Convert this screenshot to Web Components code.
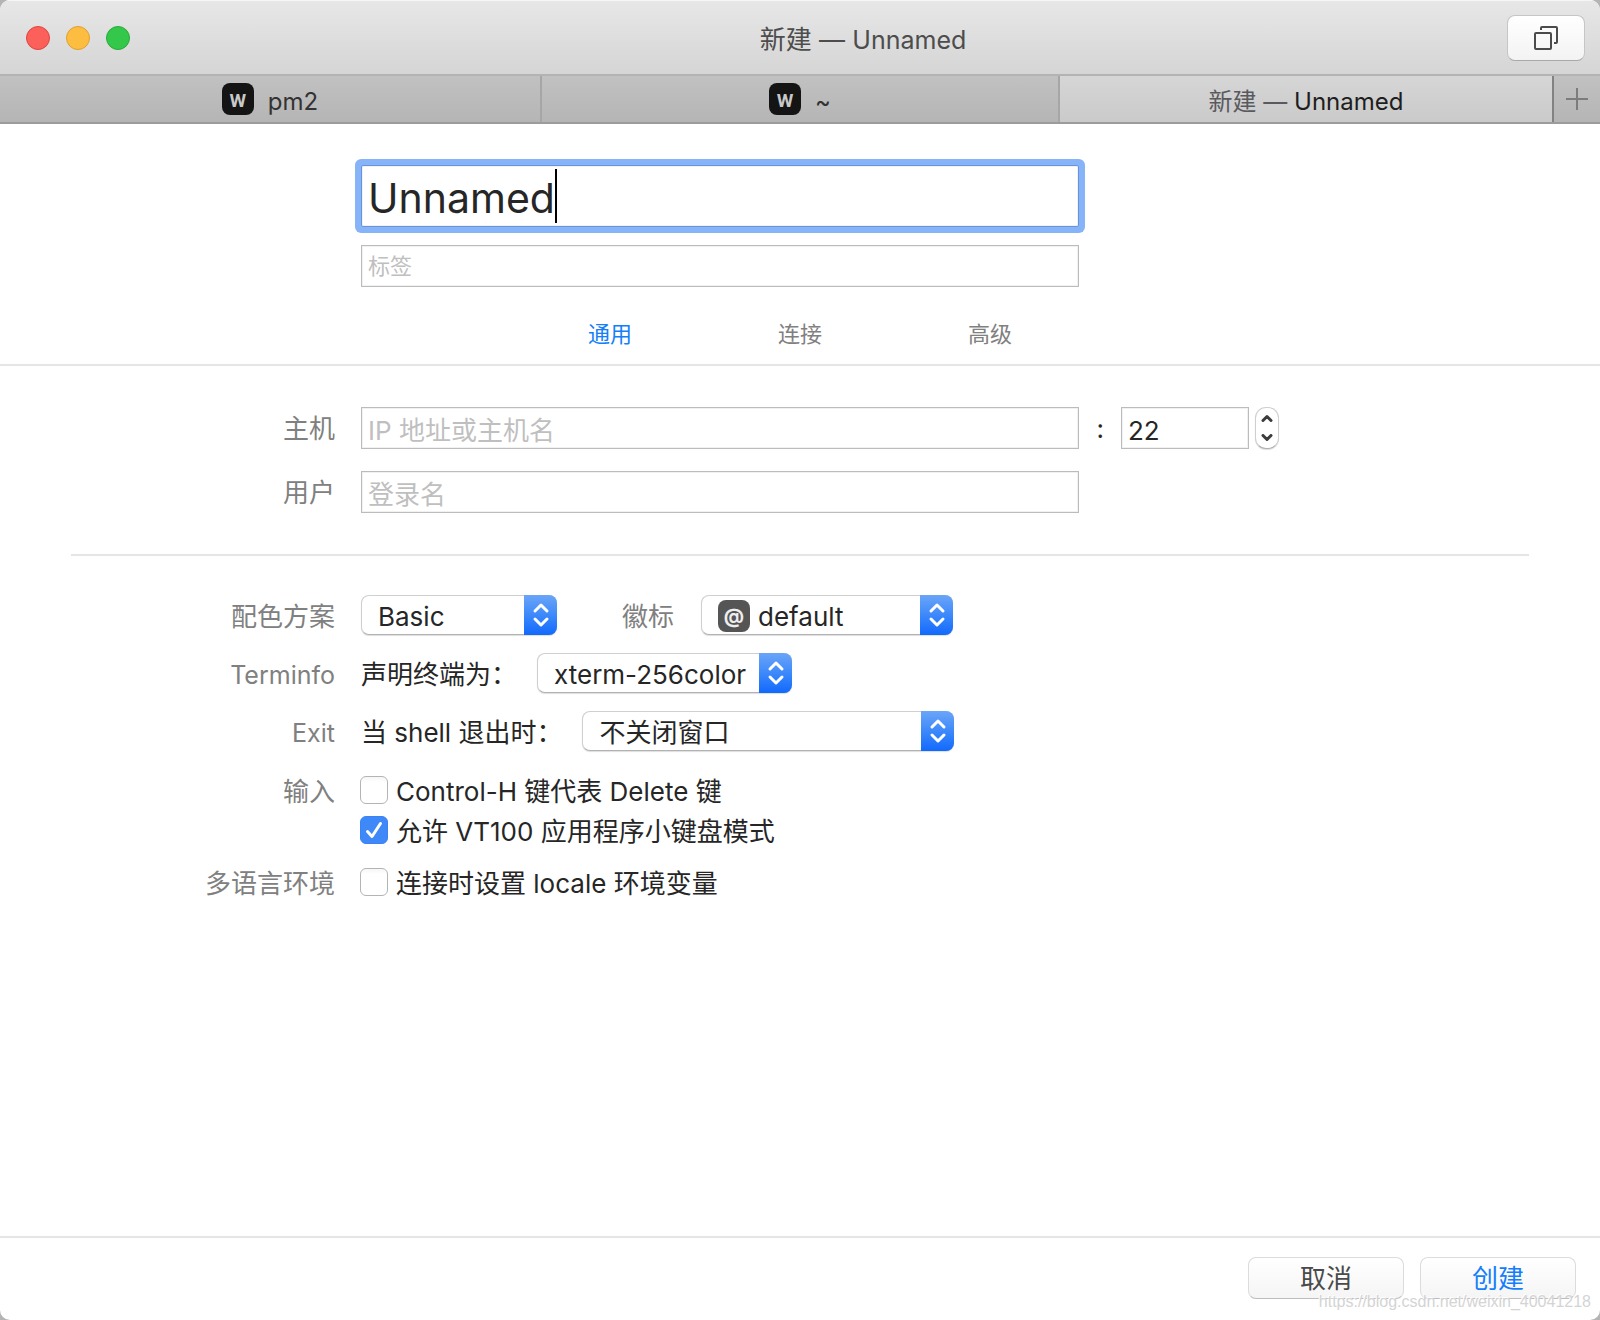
<!DOCTYPE html>
<html lang="zh-CN">
<head>
<meta charset="utf-8">
<title>新建 — Unnamed</title>
<style>
  :root {
    --ink: #262626;
    --muted: #808080;
    --accent: #147efb;
    --line: #e5e5e5;
    --latin: 25px;
  }
  * { box-sizing: border-box; }
  body {
    margin: 0;
    background: #b4b4b4;
    color: var(--ink);
    font: 26px/36px Inter, "Noto Sans CJK SC", sans-serif;
  }
  input::placeholder { color: #bfbfbf; opacity: 1; }
  input[type=number] { appearance: textfield; -moz-appearance: textfield; }
  input[type=number]::-webkit-inner-spin-button { appearance: none; margin: 0; }
  .en { font-size: var(--latin); }
</style>
</head>
<body>
<app-window>
  <title-bar slot="chrome">新建 — <span class="en">Unnamed</span></title-bar>
  <tab-strip slot="chrome">
    <window-tab><tab-badge slot="icon">W</tab-badge>pm2</window-tab>
    <window-tab><tab-badge slot="icon">W</tab-badge>~</window-tab>
    <window-tab active><span style="color:#5a5a5e">新建 —</span> Unnamed</window-tab>
  </tab-strip>

  <form-section>
    <form-row>
      <text-field size="large" focused><input id="name" aria-label="名称" value="Unnamed"></text-field>
    </form-row>
    <form-row>
      <text-field size="small"><input id="tags" aria-label="标签" placeholder="标签"></text-field>
    </form-row>
    <section-nav slot="nav">
      <a href="#general" aria-current="page">通用</a>
      <a href="#connection">连接</a>
      <a href="#advanced">高级</a>
    </section-nav>
  </form-section>

  <form-section kind="account">
    <form-row>
      <label slot="label" for="host">主机</label>
      <text-field><input id="host" placeholder="IP 地址或主机名"></text-field>
      <port-group slot="aside">
        <label slot="label" for="port">:</label>
        <text-field><input id="port" type="number" value="22"></text-field>
      </port-group>
    </form-row>
    <form-row>
      <label slot="label" for="user">用户</label>
      <text-field><input id="user" placeholder="登录名"></text-field>
    </form-row>
  </form-section>

  <form-section kind="options">
    <form-row wide>
      <label slot="label" for="scheme">配色方案</label>
      <popup-select style="--width:196px"><select id="scheme"><option>Basic</option></select></popup-select>
      <inline-label><label for="badge">徽标</label></inline-label>
      <popup-select badge style="--width:252px"><select id="badge"><option>default</option></select></popup-select>
    </form-row>
    <form-row wide>
      <span slot="label" class="en">Terminfo</span>
      <label for="term">声明终端为：</label>
      <popup-select style="--width:255px"><select id="term"><option>xterm-256color</option></select></popup-select>
    </form-row>
    <form-row wide>
      <span slot="label" class="en">Exit</span>
      <label for="exit">当 shell 退出时：</label>
      <popup-select style="--width:372px"><select id="exit"><option>不关闭窗口</option></select></popup-select>
    </form-row>
    <form-row wide checks="first">
      <span slot="label">输入</span>
      <check-box><input type="checkbox" id="ctrlh"><label for="ctrlh">Control-H 键代表 Delete 键</label></check-box>
    </form-row>
    <form-row wide checks="next">
      <check-box><input type="checkbox" id="vt100" checked><label for="vt100">允许 VT100 应用程序小键盘模式</label></check-box>
    </form-row>
    <form-row wide checks="last">
      <span slot="label">多语言环境</span>
      <check-box><input type="checkbox" id="locale"><label for="locale">连接时设置 locale 环境变量</label></check-box>
    </form-row>
  </form-section>

  <action-bar slot="footer">
    <push-button>取消</push-button>
    <push-button primary>创建</push-button>
  </action-bar>
  <page-mark slot="mark">https://blog.csdn.net/weixin_40041218</page-mark>
</app-window>

<script>
const define = (name, html, setup) => {
  const template = document.createElement('template');
  template.innerHTML = '<style>*{box-sizing:border-box}:host{box-sizing:border-box}</style>' + html;
  customElements.define(name, class extends HTMLElement {
    constructor() {
      super();
      this.attachShadow({ mode: 'open' }).append(template.content.cloneNode(true));
    }
    connectedCallback() { if (setup) setup(this, this.shadowRoot); }
  });
};

define('app-window', `
  <style>
    :host { display: flex; flex-direction: column; min-height: 100vh; position: relative;
      background: #fff; border-radius: 10px; overflow: hidden; }
    main { flex: 1; }
  </style>
  <slot name="chrome"></slot>
  <main><slot></slot></main>
  <slot name="footer"></slot>
  <slot name="mark"></slot>`);

define('title-bar', `
  <style>
    :host { display: flex; align-items: center; height: 76px; padding: 0 15px 0 26px;
      background: linear-gradient(#e7e7e7, #d5d5d5); color: #4d4d4d;
      border-top: 1px solid #f6f6f6; border-bottom: 2px solid #b3b3b3; }
    .lights { display: flex; gap: 16px; width: 193px; }
    .lights button { width: 24px; height: 24px; padding: 0; border-radius: 50%; }
    .close { background: #fc605b; border: 1px solid #e0443e; }
    .mini { background: #fdbd40; border: 1px solid #dfa034; }
    .zoom { background: #34c84a; border: 1px solid #29aa35; }
    h1 { flex: 1; margin: 0; font: inherit; text-align: center; padding-top: 5px; }
    .overview { width: 78px; height: 46px; padding: 0; display: grid; place-items: center;
      border: 1px solid #c6c6c6; border-bottom-color: #a9a9a9; border-radius: 8px;
      background: linear-gradient(#fff, #f3f3f3); }
  </style>
  <div class="lights">
    <button class="close" aria-label="关闭"></button>
    <button class="mini" aria-label="最小化"></button>
    <button class="zoom" aria-label="缩放"></button>
  </div>
  <h1><slot></slot></h1>
  <button class="overview" aria-label="显示所有标签页">
    <svg width="26" height="26" viewBox="0 0 26 26" fill="none" stroke="#4b4b4b" stroke-width="2">
      <rect x="2" y="8" width="16" height="16" rx="1"/>
      <path d="M8 5V3a1 1 0 0 1 1-1h14a1 1 0 0 1 1 1v14a1 1 0 0 1-1 1h-2"/>
    </svg>
  </button>`);

define('tab-strip', `
  <style>
    :host { display: grid; grid-template-columns: 542fr 518fr 492fr 48px; height: 48px;
      background: linear-gradient(#c1c1c1, #b5b5b5); border-bottom: 2px solid #9c9c9c; }
    button { border: 0; border-left: 2px solid #828282; background: none; padding: 0;
      display: grid; place-items: center; }
  </style>
  <slot></slot>
  <button aria-label="新标签页">
    <svg width="22" height="22" viewBox="0 0 22 22" stroke="#7c7c7c" stroke-width="2"><path d="M11 0v22M0 11h22"/></svg>
  </button>`);

define('window-tab', `
  <style>
    :host { display: flex; align-items: center; justify-content: center; gap: 14px;
      font-size: 24px; color: #333; border-right: 2px solid #a6a6a6; }
    :host([active]) { background: linear-gradient(#d6d6d6, #cacaca); color: #1e1e1e; border-right: 0; }
    .text { padding-top: 6px; }
  </style>
  <slot name="icon"></slot><span class="text"><slot></slot></span>`);

define('tab-badge', `
  <style>
    :host { display: block; width: 32px; height: 32px; padding-top: 3px; border-radius: 8px; background: #141414;
      color: #c8c8c8; font: 700 19px/30px Roboto, sans-serif; text-align: center; }
  </style>
  <slot></slot>`);

define('form-section', `
  <style>
    :host { display: block; padding-top: 41px; }
    .rows { display: flex; flex-direction: column; gap: 18px; }
    :host(:not([kind])) { border-bottom: 2px solid var(--line); }
    :host([kind=account]) { margin: 0 71px; padding-bottom: 41px; border-bottom: 2px solid var(--line); }
    :host([kind=account]) .rows { gap: 22px; margin: 0 -71px; }
    :host([kind=options]) { padding-top: 39px; }
  </style>
  <div class="rows"><slot></slot></div>
  <slot name="nav"></slot>`);

define('form-row', `
  <style>
    :host { display: grid; grid-template-columns: 335px minmax(0, 718fr) minmax(0, 495fr); column-gap: 26px; align-items: center; }
    :host([wide]) { grid-template: 100% / 335px minmax(0, 1fr); height: 40px; }
    :host([checks]) { height: 28px; }
    :host([checks=first]) { margin-top: 7px; }
    :host([checks=next]) { margin-top: -6px; }
    :host([checks=last]) { margin-top: 6px; }
    .label { text-align: right; color: var(--muted); padding-top: 2px; }
    :host([wide]) .label, .controls ::slotted(label) { padding-top: 4px; }
    .controls { display: flex; align-items: center; gap: 20px; min-width: 0; }
    .controls ::slotted(text-field) { flex: 1; }
  </style>
  <div class="label"><slot name="label"></slot></div>
  <div class="controls"><slot></slot></div>
  <slot name="aside"></slot>`);

define('text-field', `
  <style>
    :host { display: flex; align-items: center; height: 42px; padding: 0 6px; min-width: 0;
      background: #fff; border: 1px solid #bcbcbc; box-shadow: inset 0 0 0 1px #f1f1f1; }
    :host([size=large]) { height: 62px; font-size: 41px; padding: 0 6px; }
    :host([size=small]) { font-size: 22px; }
    :host([focused]) { border-color: #6795dd; box-shadow: inset 0 0 0 1px #f1f1f1, 0 0 0 6px #87b3f8;
      border-radius: 2px; }
    ::slotted(input) { flex: 1; min-width: 0; width: 100%; height: 38px; border: 0; padding: 4px 0 0;
      margin: 0; outline: 0; background: none; color: inherit; font: inherit; }
    :host([size=small]) ::slotted(input) { padding-top: 0; }
    :host([focused]) ::slotted(input) { flex: none; width: auto; height: 56px; field-sizing: content; caret-color: transparent; }
    .caret { display: none; width: 2px; height: 54px; background: #000; }
    :host([focused]) .caret { display: block; }
  </style>
  <slot></slot><span class="caret"></span>`);

define('port-group', `
  <style>
    :host { display: flex; align-items: center; }
    .colon { width: 16px; text-align: right; margin-left: -9px; padding: 2px 8px 0 0; }
    .field { display: flex; width: 128px; margin-left: 9px; }
    .field ::slotted(text-field) { flex: 1; }
    .stepper { display: flex; flex-direction: column; width: 24px; height: 42px; margin-left: 6px;
      border: 1px solid #cfcfcf; border-bottom-color: #b0b0b0; border-radius: 11px; overflow: hidden;
      box-shadow: 0 1px 1px #0002; background: #fff; }
    button { flex: 1; border: 0; padding: 0; background: none; display: grid; place-items: center; }
    svg { fill: none; stroke: #3c3c3c; stroke-width: 3; stroke-linecap: round; stroke-linejoin: round; }
  </style>
  <span class="colon"><slot name="label"></slot></span>
  <span class="field"><slot></slot></span>
  <span class="stepper">
    <button aria-label="增加"><svg width="12" height="8" viewBox="0 0 12 8"><path d="M2 6.500L6 2.500L10 6.500"/></svg></button>
    <button aria-label="减少"><svg width="12" height="8" viewBox="0 0 12 8"><path d="M2 1.500L6 5.500L10 1.500"/></svg></button>
  </span>`, (host, root) => {
    const [up, down] = root.querySelectorAll('button');
    up.onclick = () => host.querySelector('input').stepUp();
    down.onclick = () => host.querySelector('input').stepDown();
  });

define('section-nav', `
  <style>
    :host { display: flex; justify-content: center; gap: 146px; padding: 30px 0 13px; font-size: 22px; line-height: 34px; }
    ::slotted(a) { color: var(--muted); text-decoration: none; }
    ::slotted(a[aria-current]) { color: var(--accent); }
  </style>
  <slot></slot>`);

define('inline-label', `
  <style>:host { display: block; color: var(--muted); margin: 0 7px 0 45px; padding-top: 4px; }</style><slot></slot>`);

define('popup-select', `
  <style>
    :host { display: grid; width: var(--width); height: 40px; border-radius: 8px; background: #fff;
      border: 1px solid #cfcfcf; border-bottom-color: #b2b2b2; box-shadow: 0 1px 1px #0002; }
    ::slotted(select) { grid-area: 1/1; appearance: none; border: 0; outline: 0; background: none; width: 100%;
      height: 38px; padding: 3px 34px 0 16px; margin: 0; color: inherit; font-family: inherit; font-size: 26px; }
    :host([badge]) ::slotted(select) { padding-left: 56px; }
    .cap { grid-area: 1/1; justify-self: end; width: 33px; height: 40px; margin: -1px -1px 0 0; pointer-events: none;
      border-radius: 0 8px 8px 0; background: linear-gradient(#6ba5f8, #3d89fa 50%, #1169fd);
      display: grid; place-items: center; }
    .badge { display: none; grid-area: 1/1; width: 32px; height: 32px; margin: 4px 0 0 16px; border-radius: 8px;
      background: #555; color: #eee; font: 700 20px/32px Inter, sans-serif; text-align: center; pointer-events: none; }
    :host([badge]) .badge { display: block; }
  </style>
  <slot></slot>
  <span class="badge">@</span>
  <span class="cap"><svg width="18" height="26" viewBox="0 0 18 26" fill="none" stroke="#fff" stroke-width="3" stroke-linecap="round" stroke-linejoin="round">
    <path d="M3 9L9 3L15 9M3 17L9 23L15 17"/></svg></span>`, (host, root) => {
    if (!host.hasAttribute('badge')) root.querySelector('.badge').remove();
  });

define('check-box', `
  <style>
    :host { display: grid; grid-template-columns: 28px auto; column-gap: 8px; align-items: center; margin-left: -1px; }
    ::slotted(input) { appearance: none; grid-area: 1/1; width: 28px; height: 28px; margin: 0; border-radius: 6px;
      border: 1px solid #b4b4b4; background: linear-gradient(#f6f6f6, #fff 20%); }
    ::slotted(input:checked) { border-color: #3b82f6; background: #3f88f8; }
    ::slotted(label) { grid-area: 1/2; padding-top: 3px; }
    svg { grid-area: 1/1; z-index: 1; pointer-events: none; }
    svg[hidden] { display: none; }
  </style>
  <slot></slot>
  <svg width="28" height="28" viewBox="0 0 28 28" fill="none" stroke="#fff" stroke-width="3" stroke-linecap="round" stroke-linejoin="round"><path d="M7.500 15.500L12 20.500L20.500 7.500"/></svg>`,
  (host, root) => {
    const input = host.querySelector('input'), tick = root.querySelector('svg');
    const sync = () => tick.toggleAttribute('hidden', !input.checked);
    input.addEventListener('change', sync);
    sync();
  });

define('action-bar', `
  <style>
    :host { display: flex; justify-content: flex-end; gap: 16px; padding: 19px 24px 21px; border-top: 2px solid var(--line); }
  </style><slot></slot>`);

define('push-button', `
  <style>
    :host { display: block; }
    button { width: 156px; height: 42px; padding: 2px 0 0; border: 1px solid #dcdcdc; border-bottom-color: #bdbdbd;
      border-radius: 8px; background: linear-gradient(#fff, #f5f5f5); color: #4a4a4a; font: inherit; line-height: 36px; }
    :host([primary]) button { color: var(--accent); }
  </style><button><slot></slot></button>`);

define('page-mark', `
  <style>
    :host { position: absolute; right: 9px; bottom: 7px; font: 16px/22px "Liberation Sans", sans-serif;
      color: #d4d4d4; text-shadow: -1px -1px 0 #fff; pointer-events: none; }
  </style><slot></slot>`);
</script>
</body>
</html>
